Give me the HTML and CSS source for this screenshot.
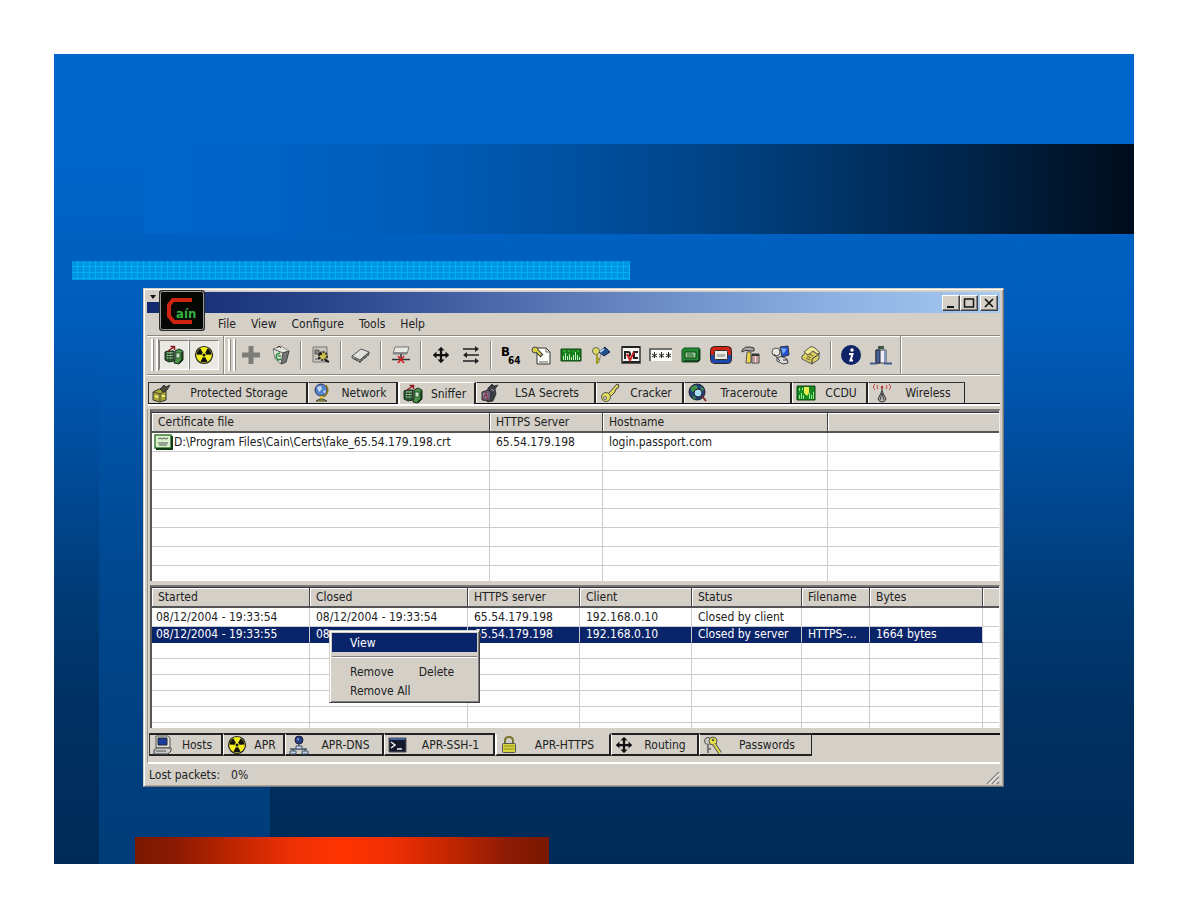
FILE: index.html
```html
<!DOCTYPE html>
<html lang="en">
<head>
    <meta charset="UTF-8">
    <meta name="viewport" content="width=device-width, initial-scale=1.0">
    <title>Cain</title>
    <link rel="stylesheet" href="styles.css">
</head>
<body>
    <!-- icons used more than once -->
    <svg class="sprite" aria-hidden="true">
        <symbol id="i-radiation" viewBox="0 0 20 20">
            <circle cx="10" cy="10" r="8.5" fill="#f4ee20" stroke="#222" stroke-width="1.2"/>
            <path d="M10 10L2.500 9.500A8 8 0 0 1 6.500 3.500zM10 10L13.500 3.500A8 8 0 0 1 17.500 9.500zM10 10L13.500 16.500A8 8 0 0 1 6.500 16.500z" fill="#111"/>
            <circle cx="10" cy="10" r="2" fill="#111" stroke="#f4ee20"/>
        </symbol>
        <symbol id="i-move" viewBox="0 0 20 20">
            <path d="M10 2v16M2 10h16" stroke="#111" stroke-width="2.500"/>
            <path d="M10 1l4 4H6zM10 19l4-4H6zM1 10l4-4v8zM19 10l-4-4v8z" fill="#111"/>
        </symbol>
        <symbol id="i-sniffer" viewBox="0 0 20 20">
            <path d="M1 7l3-1h6v10l-5 1-4-2z" fill="#2c5c34" stroke="#1c2c1c"/>
            <path d="M3 8h6M3 10.500h6M3 13h6" stroke="#c4e4bc"/>
            <path d="M5 8v7M8 8v7" stroke="#1c3c1c" stroke-width=".8"/>
            <path d="M11 6l4-2 4 2v9l-4 4-5-1 1-4z" fill="#4c9448" stroke="#1d2a1d"/>
            <path d="M12 8h4v5h-4z" fill="#cfe4c4" stroke="#2c5c34"/>
            <path d="M18 7v8l-3 3" fill="none" stroke="#123012" stroke-width="1.500"/>
            <path d="M4 6l6-4M6.500 1.500h4V5" fill="none" stroke="#8c1c20" stroke-width="1.500"/>
        </symbol>
        <symbol id="i-chip" viewBox="0 0 22 16">
            <path d="M1 2h20v12H1z" fill="#17801d" stroke="#0c4010"/>
            <path d="M3.500 13V9m2 4V6m2 7V9m2 4V7m2 6v-3m2 3V8m2 5V5m2 8V8m2 5v-3" stroke="#c8f0c8"/>
            <path d="M3 4h3M8 4h2M13 4h1M17 4h2" stroke="#48c848"/>
        </symbol>
        <symbol id="i-spy" viewBox="0 0 20 20">
            <path d="M8 5l4-4 2 2 4-1-3 4 1 5-3 7-5 1-3-2z" fill="#3c3c44" stroke="#222" stroke-width=".7"/>
            <path d="M2 9l6-2 3 3-1 8-8-1z" fill="#6a5f78" stroke="#333"/>
            <path d="M3 11h5M3 14h5M11 6l3 2" stroke="#c8a0a8"/>
            <path d="M5 8l3 9M3 16l4-6" stroke="#803040"/>
        </symbol>
    </svg>

    <main class="slide">
        <div class="title-band"></div>
        <div class="grid-bar"></div>

        <section class="window" aria-label="Cain">
            <header class="title-bar">
                <div class="sys-menu">
                    <svg width="8" height="6" viewBox="0 0 8 6"><path d="M1 1h6L4 5z" fill="#111"/></svg>
                </div>
                <svg class="logo" width="46" height="41" viewBox="0 0 46 41">
                    <rect x="1" y="1" width="44" height="39" rx="2" fill="#050805" stroke="#2a2a2a" stroke-width="2"/>
                    <rect x="1.500" y="1.500" width="43" height="38" rx="2" fill="none" stroke="#999"/>
                    <path d="M33 10H14l-4 5v11l5 6h18" fill="none" stroke="#cc2410" stroke-width="4"/>
                    <text x="17" y="28" class="logo-text">aín</text>
                </svg>
                <div class="win-buttons">
                    <button aria-label="Minimize"><svg width="12" height="12" viewBox="0 0 12 12"><path d="M2 10h7" stroke="#111" stroke-width="2"/></svg></button>
                    <button aria-label="Maximize"><svg width="12" height="12" viewBox="0 0 12 12"><path d="M1.500 2v8h9V2M1 2h10" fill="none" stroke="#111" stroke-width="1.500"/></svg></button>
                    <button class="close" aria-label="Close"><svg width="12" height="12" viewBox="0 0 12 12"><path d="M2 2l8 8M10 2l-8 8" stroke="#111" stroke-width="1.700"/></svg></button>
                </div>
            </header>

            <nav class="menu-bar">
                <button>File</button>
                <button>View</button>
                <button>Configure</button>
                <button>Tools</button>
                <button>Help</button>
            </nav>

            <div class="toolbar">
                <div class="tool-group">
                    <span class="grip"></span>
                    <button class="tool pressed" aria-label="Start sniffer"><svg width="20" height="20"><use href="#i-sniffer"/></svg></button>
                    <button class="tool pressed" aria-label="Start APR"><svg width="20" height="20"><use href="#i-radiation"/></svg></button>
                </div>
                <div class="tool-group">
                    <span class="grip"></span>
                    <button class="tool" aria-label="Add"><svg width="20" height="20" viewBox="0 0 20 20"><path d="M10 1v18M1 10h18" stroke="#7c7c78" stroke-width="5"/></svg></button>
                    <button class="tool" aria-label="Remove">
                        <svg width="20" height="20" viewBox="0 0 20 20">
                            <path d="M2 4l8-3 8 5-3 11-5 2-6-5z" fill="#e4e4de" stroke="#888"/>
                            <path d="M18 6l-3 11-5 2 2-11z" fill="#777" stroke="#444"/>
                            <path d="M2 4l10 4 6-2" fill="none" stroke="#555"/>
                            <path d="M9 8L6 9l-1 3 2 3 3-1M7 11h3" fill="none" stroke="#2d8a3a" stroke-width="1.500"/>
                            <path d="M6 3l2-2 2 2" stroke="#333" fill="none"/>
                        </svg>
                    </button>
                    <span class="tool-sep"></span>
                    <button class="tool" aria-label="Configure">
                        <svg width="20" height="20" viewBox="0 0 20 20">
                            <path d="M2 2h14v15H2z" fill="#c9c7bc" stroke="#777"/>
                            <path d="M4 5h4v4H4zM4 14h4" fill="#888" stroke="#555"/>
                            <circle cx="12" cy="11" r="4" fill="#c9bf4a" stroke="#333" stroke-width="2" stroke-dasharray="2 1"/>
                            <path d="M8 9h3M14 15l4 2M7 13h2" stroke="#222" stroke-width="2"/>
                        </svg>
                    </button>
                    <span class="tool-sep"></span>
                    <button class="tool" aria-label="Export">
                        <svg width="20" height="20" viewBox="0 0 20 20">
                            <path d="M1 11l9-7 8 3-9 8z" fill="#e0e0dc" stroke="#555"/>
                            <path d="M1 11v2l8 4 9-8V7" fill="none" stroke="#555"/>
                            <path d="M9 15v3M11 13v3M13 11v3M15 10v3M17 8v3M4 13v2M6 14v2" stroke="#333"/>
                        </svg>
                    </button>
                    <span class="tool-sep"></span>
                    <button class="tool" aria-label="Disconnect">
                        <svg width="20" height="20" viewBox="0 0 20 20">
                            <path d="M4 2h14l-2 7H2z" fill="#e8e8e4" stroke="#777"/>
                            <path d="M2 7h14v2H2z" fill="#888"/>
                            <path d="M10 9v5M1 14.500h18" stroke="#333" stroke-width="1.500"/>
                            <path d="M7 11l6 7M13 11l-6 7" stroke="#d02020" stroke-width="1.700"/>
                        </svg>
                    </button>
                    <span class="tool-sep"></span>
                    <button class="tool" aria-label="Move"><svg width="18" height="18"><use href="#i-move"/></svg></button>
                    <button class="tool" aria-label="Routes">
                        <svg width="20" height="20" viewBox="0 0 20 20">
                            <path d="M2 4h14M4 10h14M2 16h14" stroke="#222" stroke-width="1.500"/>
                            <path d="M14 1l4 3-4 3zM6 7l-4 3 4 3zM14 13l4 3-4 3z" fill="#222"/>
                        </svg>
                    </button>
                    <span class="tool-sep"></span>
                    <button class="tool" aria-label="Base64">
                        <svg width="22" height="22" viewBox="0 0 22 22">
                            <text x="1" y="12" class="b64-big">B</text>
                            <text x="8" y="20" class="b64-small">64</text>
                        </svg>
                    </button>
                    <button class="tool" aria-label="Access database">
                        <svg width="20" height="20" viewBox="0 0 20 20">
                            <path d="M6 3h9l4 4v12H6z" fill="#fbfbf5" stroke="#333"/>
                            <path d="M15 3v4h4M8 17h9" fill="none" stroke="#666"/>
                            <circle cx="4" cy="5" r="3" fill="#d8d040" stroke="#444"/>
                            <path d="M6 6l5 5" fill="none" stroke="#444" stroke-width="4"/>
                            <path d="M5 5l5 5" stroke="#d8d040" stroke-width="2"/>
                        </svg>
                    </button>
                    <button class="tool" aria-label="Syskey"><svg width="22" height="16"><use href="#i-chip"/></svg></button>
                    <button class="tool" aria-label="Keys">
                        <svg width="20" height="20" viewBox="0 0 20 20">
                            <circle cx="5" cy="6" r="3.500" fill="#ddd860" stroke="#666"/>
                            <path d="M6 9v10M6 14h3M6 17h2" stroke="#a39a20" stroke-width="2"/>
                            <path d="M8 7l6-5 5 5-6 4z" fill="#23508c" stroke="#14284c"/>
                            <path d="M9 7l4-3" stroke="#b8d0f0" stroke-width="2"/>
                            <path d="M10 9l-2 8" stroke="#888"/>
                        </svg>
                    </button>
                    <button class="tool" aria-label="VNC">
                        <svg width="20" height="20" viewBox="0 0 20 20">
                            <path d="M1 2h18v16H1z" fill="#f4f4f0" stroke="#333" stroke-width="1.500"/>
                            <path d="M1 2h18M2 17h17" stroke="#222" stroke-width="2"/>
                            <path d="M4 14V7h3q2 0 2 2t-2 2M17 7h-4v6h4" fill="none" stroke="#222" stroke-width="2"/>
                            <path d="M6 9l3 6 4-8" fill="none" stroke="#c82020" stroke-width="2"/>
                        </svg>
                    </button>
                    <button class="tool" aria-label="Password box">
                        <svg width="24" height="16" viewBox="0 0 24 16">
                            <path d="M1 1h22v13H1z" fill="#fcfcf8"/>
                            <path d="M1 14V2h22" fill="none" stroke="#444" stroke-width="1.500"/>
                            <path d="M5.500 5v6M3 7l5 3M8 7l-5 3M12.500 5v6M10 7l5 3M15 7l-5 3M19.500 5v6M17 7l5 3M22 7l-5 3" stroke="#222"/>
                        </svg>
                    </button>
                    <button class="tool" aria-label="Credential manager">
                        <svg width="20" height="20" viewBox="0 0 20 20">
                            <path d="M1 5l2-2h15l1 1v11l-2 2H1z" fill="#248a36" stroke="#145020"/>
                            <path d="M4 7h11v6H4z" fill="#9fcf9b" stroke="#0e3c14"/>
                            <path d="M6 9h6M6 11h7" stroke="#1b5f24"/>
                            <path d="M18 5v11H3" stroke="#111" fill="none"/>
                        </svg>
                    </button>
                    <button class="tool" aria-label="Remote desktop">
                        <svg width="24" height="20" viewBox="0 0 24 20">
                            <rect x="1.500" y="1.500" width="21" height="17" rx="4" fill="#d22514" stroke="#222"/>
                            <path d="M2 10v5q0 3 3 3h14q3 0 3-3v-5z" fill="#1b47ac"/>
                            <rect x="5.500" y="5.500" width="13" height="9" rx="1" fill="#eceae4" stroke="#333"/>
                            <path d="M8 9h8v3H8z" fill="#b4b4b0"/>
                        </svg>
                    </button>
                    <button class="tool" aria-label="Service tools">
                        <svg width="20" height="20" viewBox="0 0 20 20">
                            <path d="M1 5q3-4 8-3l4 1v3H9q-4-2-8 1z" fill="#aaa" stroke="#333"/>
                            <path d="M6 7h4v11H5z" fill="#e8d448" stroke="#555"/>
                            <path d="M11 9h7v9h-7z" fill="#f4f0ec" stroke="#333"/>
                            <path d="M11 10h7" stroke="#333" stroke-width="2"/>
                            <path d="M13 11v6M16 11v6" stroke="#a33"/>
                        </svg>
                    </button>
                    <button class="tool" aria-label="Computers">
                        <svg width="20" height="20" viewBox="0 0 20 20">
                            <path d="M9 2l8-1 1 9-7 2z" fill="#2450d0" stroke="#333"/>
                            <path d="M10 3l6 1-4 5z" fill="#78a8f4"/>
                            <circle cx="5" cy="7" r="4" fill="#e8e8e4" stroke="#555"/>
                            <path d="M6 13q4-3 10 1l1 4-5 1-6-3z" fill="#ddd" stroke="#444"/>
                            <path d="M3 9l6 7M12 15h4" stroke="#333"/>
                        </svg>
                    </button>
                    <button class="tool" aria-label="Dialup">
                        <svg width="20" height="20" viewBox="0 0 20 20">
                            <path d="M1 11L8 5l10 4v5l-7 5-10-5z" fill="#d9cd63" stroke="#555"/>
                            <path d="M11 19v-5l7-5" fill="none" stroke="#333"/>
                            <path d="M3 7l6-5q3-1 5 1l5 5-3 1-4-3-5 4z" fill="#f1e894" stroke="#555"/>
                            <path d="M6 11l4 2M8 9l4 2M5 13l4 2" stroke="#665d20"/>
                        </svg>
                    </button>
                    <span class="tool-sep"></span>
                    <button class="tool" aria-label="About">
                        <svg width="22" height="22" viewBox="0 0 22 22">
                            <circle cx="11" cy="11" r="10" fill="#0f2466"/>
                            <circle cx="12" cy="6" r="1.700" fill="#fff"/>
                            <path d="M9 10h3.500l-2 6.500H13" fill="none" stroke="#fff" stroke-width="2"/>
                        </svg>
                    </button>
                    <button class="tool" aria-label="Exit">
                        <svg width="22" height="20" viewBox="0 0 22 20">
                            <path d="M6 5h10v13H6z" fill="#f0f0f4" stroke="#444"/>
                            <path d="M6 5h4v13H6z" fill="#46649c" stroke="#223"/>
                            <path d="M14 5h2v13h-2z" fill="#8298c4"/>
                            <path d="M8 1h6v3H8z" fill="#405a48"/>
                            <path d="M0 18.500h7M14 18.500h8" stroke="#445a8c" stroke-width="2"/>
                        </svg>
                    </button>
                </div>
            </div>

            <nav class="tabs top-tabs">
                <button class="tab w160">
                    <svg width="20" height="20" viewBox="0 0 20 20">
                        <path d="M1 9l6-3 7 2v9l-6 2-7-2z" fill="#a9a436" stroke="#333"/>
                        <path d="M1 9l7 2 6-3M8 11v8" fill="none" stroke="#444"/>
                        <path d="M3 13l3 1M10 13h3" stroke="#f0ec80" stroke-width="2"/>
                        <path d="M8 6l4-4 2 2 4-2-3 5-4 2z" fill="#4a4a3a" stroke="#333"/>
                    </svg>
                    <span>Protected Storage</span>
                </button>
                <button class="tab w90">
                    <svg width="20" height="20" viewBox="0 0 20 20">
                        <circle cx="9" cy="7" r="6" fill="#5484cc" stroke="#335"/>
                        <path d="M5 4l4-1 1 3-3 3zM11 8l3-1-1 4z" fill="#c9d9ee"/>
                        <path d="M14 2q4 6-1 11l-4 1" fill="none" stroke="#8a7a20" stroke-width="1.500"/>
                        <path d="M8 13h3v3H8z" fill="#dcc838"/>
                        <path d="M4 18q5-4 11 0z" fill="#c8b42c" stroke="#443"/>
                    </svg>
                    <span>Network</span>
                </button>
                <button class="tab w78 active">
                    <svg width="20" height="20"><use href="#i-sniffer"/></svg>
                    <span>Sniffer</span>
                </button>
                <button class="tab w120">
                    <svg width="20" height="20"><use href="#i-spy"/></svg>
                    <span>LSA Secrets</span>
                </button>
                <button class="tab w88">
                    <svg width="20" height="20" viewBox="0 0 20 20">
                        <path d="M8 11l9-10 2 1-1 3-2 1-1 3-4 4" fill="#e4dc58" stroke="#444"/>
                        <circle cx="6" cy="14" r="4.500" fill="#e4dc58" stroke="#555"/>
                        <circle cx="5" cy="15" r="1.500" fill="#fff" stroke="#555"/>
                    </svg>
                    <span>Cracker</span>
                </button>
                <button class="tab w108">
                    <svg width="20" height="20" viewBox="0 0 20 20">
                        <circle cx="9" cy="9" r="8" fill="#20407c" stroke="#223"/>
                        <path d="M3 4l5-2 2 3-4 4-3-1zM12 3l4 3-2 3zM4 12l4 3-2 2z" fill="#3c9048"/>
                        <circle cx="10" cy="10" r="4" fill="#a6dcf4" stroke="#222"/>
                        <path d="M14 13l4 5" stroke="#7c2c2c" stroke-width="2"/>
                    </svg>
                    <span>Traceroute</span>
                </button>
                <button class="tab w76">
                    <svg width="20" height="18" viewBox="0 0 20 18">
                        <path d="M1 2h18v14H1z" fill="#148a20" stroke="#0c4010"/>
                        <path d="M3.500 15v-4m2 4V9m2 6v-4m6 4V9m2 6v-4m2 4V8M3.500 4v3m3-3v2" stroke="#9be88c"/>
                        <path d="M8 3h5v6l-2 3-3-3z" fill="#e8ec50"/>
                    </svg>
                    <span>CCDU</span>
                </button>
                <button class="tab w97">
                    <svg width="20" height="20" viewBox="0 0 20 20">
                        <path d="M3 1q-3 3 0 6M6 2Q4 4 6 6M14 2q2 2 0 4M17 1q3 3 0 6" fill="none" stroke="#cc2828" stroke-dasharray="2 .5"/>
                        <circle cx="10" cy="4" r="1.300" fill="#c33"/>
                        <path d="M10 5v6" stroke="#555" stroke-width="1.500"/>
                        <path d="M10 8l4 8q-1 3-4 3t-4-3z" fill="#b4b4ae" stroke="#333"/>
                        <path d="M10 10l-2 7M10 10l2 7" stroke="#444"/>
                    </svg>
                    <span>Wireless</span>
                </button>
            </nav>

            <div class="panel">
                <div class="list">
                    <table class="grid certs">
                        <colgroup>
                            <col class="c-file"><col class="c-server"><col class="c-host"><col>
                        </colgroup>
                        <thead>
                            <tr><th>Certificate file</th><th>HTTPS Server</th><th>Hostname</th><th></th></tr>
                        </thead>
                        <tbody>
                            <tr>
                                <td class="with-icon">
                                    <div class="cert">
                                        <svg width="19" height="16" viewBox="0 0 19 16">
                                            <path d="M1 1h16v13H1z" fill="#d8f0cc" stroke="#3a7a34" stroke-width="1.500"/>
                                            <path d="M18 2v13H2" fill="none" stroke="#123c12" stroke-width="2"/>
                                            <path d="M4 5l2-1 2 1 2-1 2 1 2-1M4 9h10M5 11h8" fill="none" stroke="#555"/>
                                        </svg>
                                        <span>D:\Program Files\Cain\Certs\fake_65.54.179.198.crt</span>
                                    </div>
                                </td>
                                <td>65.54.179.198</td><td>login.passport.com</td><td></td>
                            </tr>
                            <tr><td></td><td></td><td></td><td></td></tr>
                            <tr><td></td><td></td><td></td><td></td></tr>
                            <tr><td></td><td></td><td></td><td></td></tr>
                            <tr><td></td><td></td><td></td><td></td></tr>
                            <tr><td></td><td></td><td></td><td></td></tr>
                            <tr><td></td><td></td><td></td><td></td></tr>
                            <tr class="cut"><td></td><td></td><td></td><td></td></tr>
                        </tbody>
                    </table>
                </div>

                <div class="list sessions-list">
                    <table class="grid sessions">
                        <colgroup>
                            <col class="c-date"><col class="c-date"><col class="c-ip"><col class="c-ip"><col class="c-status"><col class="c-name"><col class="c-bytes"><col>
                        </colgroup>
                        <thead>
                            <tr><th>Started</th><th>Closed</th><th>HTTPS server</th><th>Client</th><th>Status</th><th>Filename</th><th>Bytes</th><th></th></tr>
                        </thead>
                        <tbody>
                            <tr class="first"><td>08/12/2004 - 19:33:54</td><td>08/12/2004 - 19:33:54</td><td>65.54.179.198</td><td>192.168.0.10</td><td>Closed by client</td><td></td><td></td><td></td></tr>
                            <tr class="selected"><td>08/12/2004 - 19:33:55</td><td>08</td><td>65.54.179.198</td><td>192.168.0.10</td><td>Closed by server</td><td>HTTPS-...</td><td>1664 bytes</td><td></td></tr>
                            <tr><td></td><td></td><td></td><td></td><td></td><td></td><td></td><td></td></tr>
                            <tr><td></td><td></td><td></td><td></td><td></td><td></td><td></td><td></td></tr>
                            <tr><td></td><td></td><td></td><td></td><td></td><td></td><td></td><td></td></tr>
                            <tr><td></td><td></td><td></td><td></td><td></td><td></td><td></td><td></td></tr>
                            <tr><td></td><td></td><td></td><td></td><td></td><td></td><td></td><td></td></tr>
                            <tr class="cut"><td></td><td></td><td></td><td></td><td></td><td></td><td></td><td></td></tr>
                        </tbody>
                    </table>

                    <div class="context-menu" role="menu">
                        <button class="hot" role="menuitem">View</button>
                        <hr>
                        <button role="menuitem">Remove <span>Delete</span></button>
                        <button role="menuitem">Remove All</button>
                    </div>
                </div>

                <nav class="tabs bottom-tabs">
                    <button class="tab w74">
                        <svg width="20" height="20" viewBox="0 0 20 20">
                            <path d="M3 1h12l2 2v9l-2 1H3z" fill="#e0ddd4" stroke="#555"/>
                            <path d="M5 3h9v7H5z" fill="#1c3c9c" stroke="#223"/>
                            <path d="M1 15l3-2h14v3l-3 3H1z" fill="#c8c8c4" stroke="#444"/>
                            <path d="M3 16h10" stroke="#555"/>
                        </svg>
                        <span>Hosts</span>
                    </button>
                    <button class="tab w62">
                        <svg width="20" height="20"><use href="#i-radiation"/></svg>
                        <span>APR</span>
                    </button>
                    <button class="tab w99">
                        <svg width="20" height="20" viewBox="0 0 20 20">
                            <circle cx="10" cy="5" r="4" fill="#24408c" stroke="#223"/>
                            <path d="M8 3l2 1-1 2z" fill="#b8ccf0"/>
                            <path d="M10 9v5M1 14h17M4 14v4M16 14v4" stroke="#456" stroke-width="1.500"/>
                            <path d="M7 11h6v3H7zM1 16h6v3H1zM13 16h6v3h-6z" fill="#c4d4ec" stroke="#456"/>
                        </svg>
                        <span>APR-DNS</span>
                    </button>
                    <button class="tab w111">
                        <svg width="20" height="18" viewBox="0 0 20 18">
                            <path d="M1 2h17v14H1z" fill="#15182c" stroke="#555"/>
                            <path d="M2 3h15" stroke="#40609c" stroke-width="2"/>
                            <path d="M3 6l4 3-4 3M9 13h5" fill="none" stroke="#f4f4f0" stroke-width="1.500"/>
                        </svg>
                        <span>APR-SSH-1</span>
                    </button>
                    <button class="tab w116 active">
                        <svg width="20" height="20" viewBox="0 0 20 20">
                            <path d="M5 9V6q0-4 4-4t4 4v3" fill="none" stroke="#77752c" stroke-width="2"/>
                            <rect x="2.500" y="8.500" width="13" height="9" rx="1" fill="#d4d43c" stroke="#555"/>
                            <path d="M4 11h10M4 14h10" stroke="#8c8a20"/>
                        </svg>
                        <span>APR-HTTPS</span>
                    </button>
                    <button class="tab w88">
                        <svg width="18" height="18"><use href="#i-move"/></svg>
                        <span>Routing</span>
                    </button>
                    <button class="tab w113">
                        <svg width="20" height="20" viewBox="0 0 20 20">
                            <circle cx="5" cy="6" r="3.500" fill="#c9c9c5" stroke="#555"/>
                            <path d="M5 9v9M5 14h3" stroke="#777" stroke-width="2"/>
                            <circle cx="10" cy="6" r="4" fill="#e4e048" stroke="#555"/>
                            <path d="M11 9l6 9" stroke="#555" stroke-width="4"/>
                            <path d="M11 9l6 9" stroke="#e4e048" stroke-width="2"/>
                            <circle cx="10" cy="5" r="1.200" fill="#555"/>
                        </svg>
                        <span>Passwords</span>
                    </button>
                </nav>
            </div>

            <footer class="status-bar">
                <span>Lost packets:</span>
                <span>0%</span>
                <svg class="size-grip" width="14" height="14" viewBox="0 0 14 14">
                    <path d="M1 13L13 1M6 13l7-7M11 13l2-2" stroke="#808080" stroke-width="1.500"/>
                    <path d="M2.500 13L13 2.500M7.500 13L13 7.500" stroke="#fff"/>
                </svg>
            </footer>
        </section>

        <div class="red-bar"></div>
    </main>
</body>
</html>
```
FILE: styles.css
```css
* {
    box-sizing: border-box;
}

body {
    margin: 0;
    padding: 54px;
    background-color: white;
    font-family: "DejaVu Sans Condensed", "DejaVu Sans", sans-serif;
    font-size: 12px;
    line-height: 16px;
    color: #222;
}

.sprite {
    display: none;
}

svg {
    display: block;
    flex: none;
}

button {
    font: inherit;
    color: inherit;
    background: none;
    border: none;
    padding: 0;
    margin: 0;
}

/* slide background */

.slide {
    display: flex;
    flex-direction: column;
    padding-top: 90px;
    background:
        linear-gradient(#0066cc 0%, #0066cc 12%, #0061c2 22%, #005cba 33%, #0054aa 44%, #004c98 57%, #00468c 68%, #004080 85%, #003c78 100%) 45px 0 / 171px 100% no-repeat,
        linear-gradient(#0066cc 0%, #0066cc 12%, #0061c2 22%, #005cba 33%, #0052a8 44%, #00458c 57%, #003a74 68%, #003062 81%, #002b58 100%);
}

.title-band {
    height: 90px;
    margin-left: 90px;
    background: linear-gradient(90deg, #0066cc 0%, #0064c8 10%, #005cb8 28%, #0050a0 44%, #004080 60%, #003060 73%, #00244a 83%, #001a36 90%, #000c1a 100%);
}

.grid-bar {
    width: 51.7%;
    height: 19px;
    margin: 27px 0 8px 18px;
    background-color: #0094e0;
    background-image:
        linear-gradient(90deg, #00b2f4 1px, transparent 1px),
        linear-gradient(#00b2f4 1px, transparent 1px);
    background-size: 6px 6px;
    background-position: 5px 5px;
}

.red-bar {
    width: 38.3%;
    height: 27px;
    margin: 50px 0 0 81px;
    background: linear-gradient(90deg, #7a1800 0%, #8c1a04 10%, #b82400 22%, #ee3006 38%, #ff3300 50%, #f02e04 62%, #b82400 79%, #8c1a04 90%, #7a1800 100%);
}

/* window */

.window {
    position: relative;
    margin: 0 130px 0 89px;
    padding: 2px 3px 0 2px;
    background-color: #d4d0c8;
    border: 1px solid #d4d0c8;
    border-right-color: #777;
    border-bottom-color: #777;
    box-shadow: inset 1px 1px 0 white, inset -1px -1px 0 #aaa69e;
}

.title-bar {
    display: flex;
    height: 21px;
    margin: 1px 0 0 1px;
    background: linear-gradient(90deg, #122a70 0%, #2a468e 22%, #5c7ab8 50%, #8cb0e2 80%, #a6caf0 100%);
}

.sys-menu {
    width: 12px;
    height: 10px;
    padding: 2px;
    background-color: #d4d0c8;
}

.logo {
    position: absolute;
    left: 15px;
    top: 1px;
}

.logo-text {
    font-size: 13px;
    font-weight: bold;
    fill: #35b440;
}

.win-buttons {
    display: flex;
    align-items: center;
    margin-left: auto;
    padding-right: 2px;
}

.win-buttons button {
    display: flex;
    align-items: center;
    justify-content: center;
    width: 18px;
    height: 16px;
    background-color: #d4d0c8;
    border: 1px solid white;
    border-right-color: #404040;
    border-bottom-color: #404040;
    box-shadow: inset -1px -1px 0 #808080;
}

.win-buttons .close {
    margin-left: 2px;
}

.menu-bar {
    display: flex;
    gap: 15px;
    height: 22px;
    padding-left: 72px;
}

.toolbar {
    display: flex;
    height: 40px;
    margin-left: 1px;
    padding-left: 4px;
    border-top: 1px solid #8c8880;
    border-bottom: 1px solid #8c8880;
    box-shadow: inset 0 1px 0 white, 0 1px 0 white;
}

.tool-group {
    display: flex;
    align-items: center;
    padding-right: 4px;
    margin-right: 4px;
    border-right: 1px solid #8c8880;
    box-shadow: 1px 0 0 white;
}

.grip {
    width: 7px;
    height: 32px;
    margin-right: 1px;
    border: 1px solid white;
    border-width: 0 2px;
    box-shadow: 1px 0 0 #8c8880, inset 1px 0 0 #8c8880;
}

.tool {
    display: flex;
    align-items: center;
    justify-content: center;
    width: 30px;
    height: 30px;
}

.tool.pressed {
    background-color: #ebe9e4;
    border: 1px solid white;
    border-top-color: #808080;
    border-left-color: #808080;
}

.tool-sep {
    width: 2px;
    height: 28px;
    margin: 0 4px;
    border-left: 1px solid #8c8880;
    border-right: 1px solid white;
}

.b64-big {
    font-size: 13px;
    font-weight: bold;
}

.b64-small {
    font-size: 10px;
    font-weight: bold;
}

/* tabs */

.tabs {
    display: flex;
}

.top-tabs {
    height: 22px;
    margin: 7px 0 0 2px;
    border-bottom: 1px solid #111;
    box-shadow: 0 2px 0 white;
}

.tab {
    display: flex;
    align-items: center;
    padding-left: 3px;
    white-space: nowrap;
    border: 1px solid #333;
    border-left-color: white;
    border-bottom: none;
    border-right: 2px solid #222;
}

.tab span {
    flex: 1;
    text-align: center;
}

.tab.active {
    margin-bottom: -1px;
    background-color: #d4d0c8;
    border-top-color: white;
    border-left: 2px solid white;
}

.tab:first-child {
    border-left-color: #333;
}

.tab:last-child {
    border-right-width: 1px;
}

.w62 { width: 62px; }
.w74 { width: 74px; }
.w76 { width: 76px; }
.w78 { width: 78px; }
.w88 { width: 88px; }
.w90 { width: 90px; }
.w97 { width: 97px; }
.w99 { width: 99px; }
.w108 { width: 108px; }
.w111 { width: 111px; }
.w113 { width: 113px; }
.w116 { width: 116px; }
.w120 { width: 120px; }
.w160 { width: 160px; }

/* lists */

.panel {
    margin: 5px 0 0 1px;
    padding-left: 2px;
    border-bottom: 2px solid white;
    border-left: 1px solid #9c988f;
}

.list {
    position: relative;
    background-color: white;
    border-top: 3px solid #777;
    border-left: 2px solid #555;
    border-right: 1px solid #eee;
    box-shadow: inset 0 1px 0 #333;
    padding-top: 1px;
}

.sessions-list {
    margin-top: 4px;
    border-top-width: 2px;
}

.grid {
    width: 100%;
    table-layout: fixed;
    border-collapse: separate;
    border-spacing: 0;
}

.grid th {
    height: 20px;
    padding: 0 5px 0 6px;
    text-align: left;
    font-weight: normal;
    white-space: nowrap;
    background-color: #d4d0c8;
    border-right: 1px solid #444;
    border-bottom: 2px solid #555;
    box-shadow: inset 1px 1px 0 white;
}

.grid th:last-child {
    border-right: none;
}

.grid td {
    height: 19px;
    padding: 0 0 0 6px;
    white-space: nowrap;
    overflow: hidden;
    border-right: 1px solid #ccc;
    border-bottom: 1px solid #ccc;
}

.grid td:last-child {
    border-right: none;
}

.grid .with-icon {
    padding-left: 2px;
}

.cert {
    display: flex;
    align-items: center;
    gap: 1px;
}

.grid .cut td {
    height: 15px;
    border-bottom: none;
}

.sessions td {
    height: 16px;
    line-height: 15px;
}

.sessions td:first-child {
    padding-left: 4px;
}

.sessions .first td {
    height: 19px;
}

.sessions .cut td {
    height: 5px;
}

.sessions .selected td:not(:last-child) {
    color: white;
    background-color: #0a246a;
    border-bottom-color: #0a246a;
}

.c-file { width: 338px; }
.c-server { width: 113px; }
.c-host { width: 225px; }
.c-date { width: 158px; }
.c-ip { width: 112px; }
.c-status { width: 110px; }
.c-name { width: 68px; }
.c-bytes { width: 113px; }

.context-menu {
    position: absolute;
    left: 177px;
    top: 43px;
    width: 151px;
    padding: 2px;
    background-color: #d4d0c8;
    border: 1px solid #d4d0c8;
    border-right-color: #404040;
    border-bottom-color: #404040;
    box-shadow: inset 1px 1px 0 white, inset -1px -1px 0 #808080;
}

.context-menu button {
    display: flex;
    width: 100%;
    padding: 2px 0 1px 18px;
}

.context-menu span {
    margin-left: 25px;
}

.context-menu .hot {
    color: white;
    background-color: #0a246a;
}

.context-menu hr {
    margin: 4px 0;
    border: none;
    border-top: 1px solid #808080;
    border-bottom: 1px solid white;
}

.bottom-tabs {
    height: 29px;
    padding-bottom: 6px;
    margin-top: 5px;
    background: linear-gradient(#111, #111) 0 0 / 100% 2px no-repeat;
}

.bottom-tabs .tab {
    border-top: 2px solid #222;
    border-bottom: 2px solid #222;
}

.bottom-tabs .tab.active {
    margin-bottom: 0;
    border-top-color: #d4d0c8;
}

.bottom-tabs .tab:first-child {
    margin-left: -1px;
}

.status-bar {
    display: flex;
    gap: 11px;
    height: 22px;
    padding: 3px 0 0 3px;
}

.size-grip {
    margin: 4px 0 0 auto;
}
```
